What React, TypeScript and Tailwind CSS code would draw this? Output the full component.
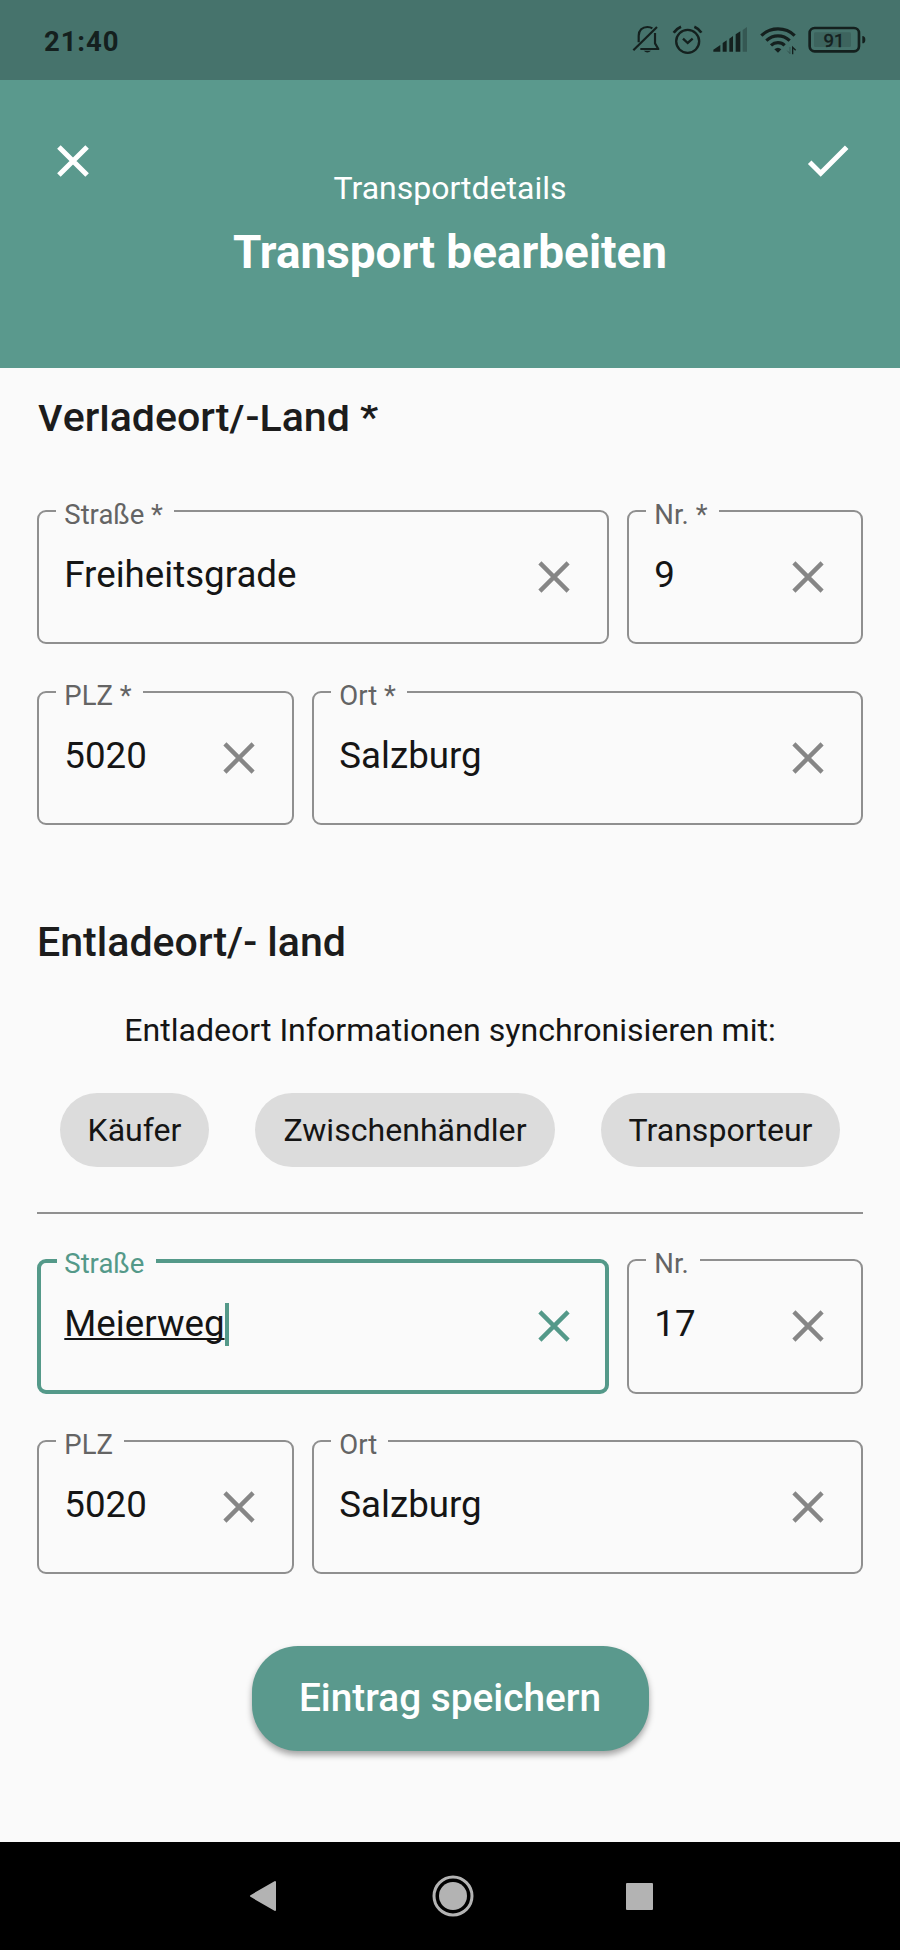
import type { ReactNode } from 'react';

function Cross({ className, weight = 4.4 }: { className: string; weight?: number }) {
  return (
    <svg viewBox="0 0 48 48" fill="none" stroke="currentColor" strokeWidth={weight} className={`size-12 shrink-0 ${className}`}>
      <path d="M9.9 9.9 38.1 38.1M38.1 9.9 9.9 38.1" />
    </svg>
  );
}

function StatusBar() {
  return (
    <div className="flex h-20 items-center justify-between bg-[#46736c] pl-11 pr-[33.33px] text-[#14201e]">
      <span className="pt-[3px] text-[27.5px] font-bold leading-8 tracking-[0.9px]">21:40</span>
      <svg viewBox="95 70 705 100" className="h-[33.33px] w-[235px]" fill="none" stroke="currentColor">
        {/* muted bell */}
        <g strokeWidth="6.5">
          <path d="M99 152 170 82" />
          <path d="M115 128V108C115 92 126 82 141 82C147 82 152 83 156 86M164 100V131L174 148H120" strokeLinejoin="round" />
          <path d="M130 153H152Q141 164 130 153Z" fill="currentColor" stroke="none" />
        </g>
        {/* alarm clock */}
        <circle cx="262" cy="125" r="34.5" strokeWidth="7" />
        <path d="M248 117 262 130 277 117" strokeWidth="7" />
        <path d="M220 99Q228 87 242 81M282 81Q296 87 303 99" strokeWidth="8" />
        {/* signal strength */}
        <g fill="currentColor" stroke="none">
          <path d="M339 156V150L360 136V156Z" />
          <path d="M367 156V130L379 122V156Z" />
          <path d="M387 156V117L398 109V156Z" />
          <path d="M406 156V104L420 95V156Z" />
          <path d="M427 156V91L440 82V156Z" opacity="0.32" />
        </g>
        {/* wifi */}
        <g strokeWidth="9.5">
          <path d="M483 108C510 81 556 81 583 108" />
          <path d="M498 123C518 104 548 104 568 123" />
          <path d="M512 137C524 126 542 126 553 137" />
          <path d="M522 149Q533 139 543 149L533 159Z" fill="currentColor" stroke="none" />
          <path d="M577 164V143L586 152" strokeWidth="4" />
          <path d="M569 142V162L561 153" strokeWidth="3" opacity="0.35" />
        </g>
        {/* battery */}
        <rect x="628" y="85" width="148" height="70" rx="15" strokeWidth="8" />
        <rect x="641" y="98" width="111" height="44" rx="4" fill="currentColor" stroke="none" opacity="0.17" />
        <path d="M786 109Q795 109 795 120Q795 131 786 131Z" fill="currentColor" stroke="none" />
        <text x="701" y="142" textAnchor="middle" fontSize="56" textLength="63" lengthAdjust="spacingAndGlyphs" fill="currentColor" stroke="currentColor" strokeWidth="1.5">91</text>
      </svg>
    </div>
  );
}

function Header() {
  return (
    <header className="flex h-72 items-start justify-between bg-[#5a998d] px-[49px] text-white">
      <button aria-label="Schließen" className="mt-[57px]"><Cross className="text-white" weight={5} /></button>
      <div className="flex flex-col items-center pt-[88px]">
        <p className="text-[32px] leading-10">Transportdetails</p>
        <h1 className="mt-4 text-[45.9px] font-bold leading-[56px]">Transport bearbeiten</h1>
      </div>
      <button aria-label="Bestätigen" className="mt-[57px]">
        <svg viewBox="0 0 48 48" className="size-12" fill="none" stroke="currentColor" strokeWidth="5">
          <path d="M6.7 25.3 17.7 36.3 43.7 10.3" />
        </svg>
      </button>
    </header>
  );
}

function Field({ label, value, width, height = 'h-[134px]', focused = false }: {
  label: string; value: string; width: string; height?: string; focused?: boolean;
}) {
  return (
    <div className={`relative flex items-start justify-between rounded-[9px] ${width} ${height} ${focused ? 'border-4 border-[#549989] pl-[23.3px] pr-[27px] pt-[39px]' : 'border-2 border-[#8f8f8f] pl-[25.3px] pr-[29px] pt-[41px]'}`}>
      <span className={`absolute bg-[#fafafa] text-[27.5px] leading-8 ${focused ? '-top-[15px] left-4 pl-[7.3px] pr-[12px] text-[#549989]' : '-top-[13px] left-[17px] pl-[8.3px] pr-[11px] text-[#646464]'}`}>{label}</span>
      <span className={`flex text-[36.7px] leading-[44px] text-[#151515] ${focused ? 'underline decoration-2 underline-offset-[2px] [text-decoration-skip-ink:none]' : ''}`}>
        {value}
        {focused && <i className="mt-px h-[43px] w-1 bg-[#549989]" />}
      </span>
      <Cross className={focused ? 'text-[#549989]' : 'text-[#868686]'} />
    </div>
  );
}

function Row({ className, children }: { className: string; children: ReactNode }) {
  return <div className={`flex justify-between ${className}`}>{children}</div>;
}

function Chip({ children }: { children: ReactNode }) {
  return <button className="h-[74px] rounded-[37px] bg-[#dcdcdc] px-7 text-[32.1px] leading-10 text-[#151515]">{children}</button>;
}

function NavBar() {
  return (
    <nav className="flex h-[108px] items-center bg-black pl-[249px] text-[#b3b3b3]">
      <svg viewBox="0 0 28 32" className="h-8 w-7" fill="currentColor" stroke="currentColor" strokeWidth="2" strokeLinejoin="round">
        <path d="M2 16 26 2V30Z" />
      </svg>
      <svg viewBox="0 0 42 42" className="ml-[155px] size-[42px]" fill="none" stroke="currentColor">
        <circle cx="21" cy="21" r="19" strokeWidth="3" />
        <circle cx="21" cy="21" r="14" fill="currentColor" stroke="none" />
      </svg>
      <i className="ml-[152px] size-[27px] rounded-[1px] bg-current" />
    </nav>
  );
}

export default function App() {
  return (
    <div className="flex h-[1950px] w-[900px] flex-col bg-[#fafafa] font-['Roboto',sans-serif]">
      <StatusBar />
      <Header />
      <main className="flex grow flex-col px-[37px]">
        {/* first heading is partly scrolled beneath the header */}
        <div className="mt-[37px] h-[38px] overflow-hidden">
          <h2 className="-mt-3 text-[41.1px] font-medium leading-[48px] text-[#1c1c1c]">Verladeort/-Land *</h2>
        </div>
        <Row className="mt-[67px]">
          <Field label="Straße *" value="Freiheitsgrade" width="w-[572px]" />
          <Field label="Nr. *" value="9" width="w-[236px]" />
        </Row>
        <Row className="mt-[47px]">
          <Field label="PLZ *" value="5020" width="w-[257px]" />
          <Field label="Ort *" value="Salzburg" width="w-[551px]" />
        </Row>
        <h2 className="mt-[93px] text-[41.1px] font-medium leading-[48px] text-[#1c1c1c]">Entladeort/- land</h2>
        <p className="mt-11 text-center text-[32.1px] leading-10 text-[#151515]">Entladeort Informationen synchronisieren mit:</p>
        <div className="mt-[43px] flex justify-center gap-[46px]">
          <Chip>Käufer</Chip>
          <Chip>Zwischenhändler</Chip>
          <Chip>Transporteur</Chip>
        </div>
        <hr className="mt-[45px] border-t-2 border-[#909090]" />
        <Row className="mt-[45px]">
          <Field label="Straße" value="Meierweg" width="w-[572px]" height="h-[135px]" focused />
          <Field label="Nr." value="17" width="w-[236px]" height="h-[135px]" />
        </Row>
        <Row className="mt-[46px]">
          <Field label="PLZ" value="5020" width="w-[257px]" />
          <Field label="Ort" value="Salzburg" width="w-[551px]" />
        </Row>
        <button className="mt-[72px] h-[105px] w-[397px] self-center rounded-[46px] bg-[#5a998d] text-[38.8px] font-medium text-white shadow-[0_4px_6px_rgba(0,0,0,0.35)]">
          Eintrag speichern
        </button>
      </main>
      <NavBar />
    </div>
  );
}
